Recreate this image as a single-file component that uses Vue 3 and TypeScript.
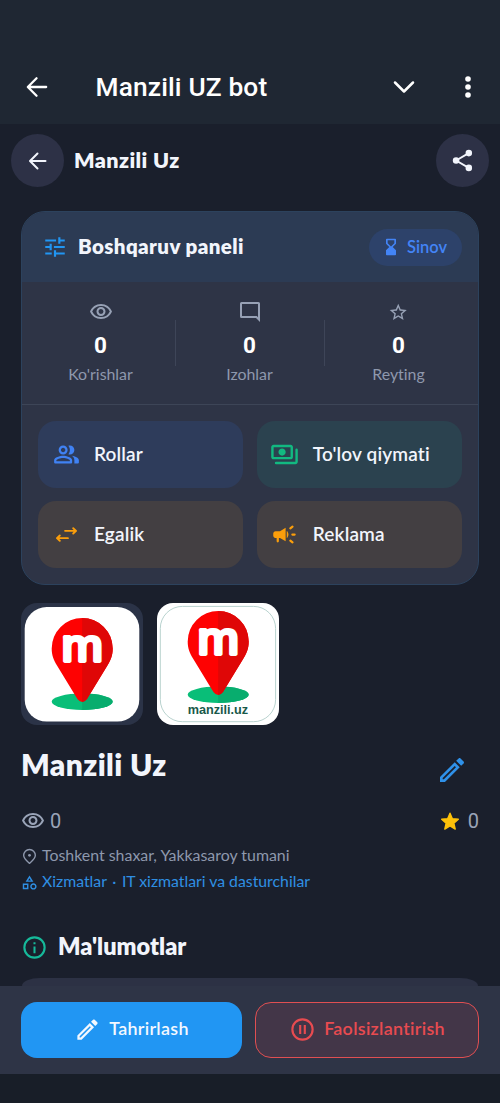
<script setup lang="ts">
interface Stat {
  icon: 'eye' | 'chat' | 'star'
  value: number
  label: string
}
interface Action {
  icon: 'people' | 'payments' | 'swap' | 'campaign'
  label: string
  tone: string
}

const stats: Stat[] = [
  { icon: 'eye', value: 0, label: "Ko'rishlar" },
  { icon: 'chat', value: 0, label: 'Izohlar' },
  { icon: 'star', value: 0, label: 'Reyting' },
]

const actions: Action[] = [
  { icon: 'people', label: 'Rollar', tone: 'blue' },
  { icon: 'payments', label: "To'lov qiymati", tone: 'green' },
  { icon: 'swap', label: 'Egalik', tone: 'amber' },
  { icon: 'campaign', label: 'Reklama', tone: 'amber' },
]

const eyePath =
  'M12 6a9.77 9.77 0 0 1 8.82 5.5A9.77 9.77 0 0 1 12 17a9.77 9.77 0 0 1-8.82-5.5A9.77 9.77 0 0 1 12 6m0-2C7 4 2.73 7.11 1 11.5 2.73 15.89 7 19 12 19s9.27-3.11 11-7.5C21.27 7.11 17 4 12 4zm0 5a2.5 2.5 0 0 1 0 5 2.5 2.5 0 0 1 0-5m0-2a4.5 4.5 0 1 0 0 9 4.5 4.5 0 0 0 0-9z'
const editPath =
  'M14.06 9.02l.92.92L5.92 19H5v-.92l9.06-9.06M17.66 3c-.25 0-.51.1-.7.29l-1.83 1.83 3.75 3.75 1.83-1.83c.39-.39.39-1.02 0-1.41l-2.34-2.34c-.2-.2-.45-.29-.71-.29zm-3.6 3.19L3 17.25V21h3.75L17.81 9.94l-3.75-3.75z'
</script>

<template>
  <div class="screen">
    <header class="appbar">
      <svg class="ab-back" viewBox="0 0 24 24"><path class="line" d="M22 12H2.500M11.500 2.500 2 12l9.500 9.500" /></svg>
      <h1 class="ab-title">Manzili UZ bot</h1>
      <svg class="ab-down" viewBox="0 0 24 24"><path class="line" d="M3 7.500 12 16.500 21 7.500" /></svg>
      <svg class="ab-more" viewBox="0 0 8 24"><circle cx="4" cy="4" r="2.800" /><circle cx="4" cy="12" r="2.800" /><circle cx="4" cy="20" r="2.800" /></svg>
    </header>

    <div class="subbar">
      <button class="round">
        <svg class="sb-back" viewBox="0 0 20 20"><path class="line" d="M17.500 10H2.500M9.500 2.500 2 10l7.500 7.500" /></svg>
      </button>
      <h2 class="sb-title">Manzili Uz</h2>
      <button class="round">
        <svg class="sb-share" viewBox="0 0 24 24">
          <path class="line" d="M18.500 4.300 5.300 12l13.200 7.700" />
          <circle cx="18.600" cy="4.300" r="3.400" /><circle cx="5.300" cy="12" r="3.400" /><circle cx="18.600" cy="19.700" r="3.400" />
        </svg>
      </button>
    </div>

    <section class="panel">
      <div class="panel-head">
        <svg class="tune" viewBox="0 0 24 24"><path d="M3 17v2h6v-2H3zM3 5v2h10V5H3zm10 16v-2h8v-2h-8v-2h-2v6h2zM7 9v2H3v2h4v2h2V9H7zm14 4v-2H11v2h10zm-6-4h2V7h4V5h-4V3h-2v6z" /></svg>
        <h3 class="panel-title">Boshqaruv paneli</h3>
        <span class="badge">
          <svg viewBox="0 0 24 24"><path d="M17 22a1 1 0 0 0 1-1v-5l-4-4 4-4V3a1 1 0 0 0-1-1H7a1 1 0 0 0-1 1v5l4 4-4 4v5a1 1 0 0 0 1 1h10zM8 7.500V4h8v3.500l-4 4-4-4z" /></svg>
          <span class="badge-text">Sinov</span>
        </span>
      </div>

      <div class="stats">
        <div v-for="s in stats" :key="s.label" class="stat">
          <div class="stat-icon" :class="s.icon">
            <svg viewBox="0 0 24 24">
              <path v-if="s.icon === 'eye'" :d="eyePath" />
              <path v-else-if="s.icon === 'chat'" d="M20.500 2h-17A1.500 1.500 0 0 0 2 3.500v13A1.500 1.500 0 0 0 3.500 18H18l4 4V3.500A1.500 1.500 0 0 0 20.500 2zM20 17.170 18.830 16H4V4h16v13.170z" />
              <path v-else d="M22 9.240l-7.190-.62L12 2 9.190 8.630 2 9.240l5.460 4.730L5.820 21 12 17.270 18.180 21l-1.630-7.030L22 9.240zM12 15.400l-3.760 2.270 1-4.280-3.320-2.880 4.380-.38L12 6.100l1.710 4.040 4.380.38-3.320 2.880 1 4.280L12 15.400z" />
            </svg>
          </div>
          <strong class="stat-value">{{ s.value }}</strong>
          <span class="stat-label">{{ s.label }}</span>
        </div>
      </div>

      <div class="actions">
        <button v-for="a in actions" :key="a.label" class="action" :class="a.tone">
          <span class="action-icon" :class="a.icon">
            <svg v-if="a.icon === 'people'" viewBox="0 0 24 24">
              <path d="M16.670 13.130C18.040 14.060 19 15.320 19 17v3h3a1 1 0 0 0 1-1v-2c0-2.180-3.570-3.470-6.330-3.870zM15 12c2.210 0 4-1.790 4-4s-1.790-4-4-4c-.47 0-.91.1-1.330.24C14.500 5.270 15 6.580 15 8s-.5 2.730-1.330 3.760c.42.14.86.24 1.330.24zM9 12c2.210 0 4-1.790 4-4s-1.790-4-4-4-4 1.790-4 4 1.790 4 4 4zm0-6c1.100 0 2 .9 2 2s-.9 2-2 2-2-.9-2-2 .9-2 2-2zm0 7c-2.670 0-8 1.340-8 4v2a1 1 0 0 0 1 1h14a1 1 0 0 0 1-1v-2c0-2.660-5.330-4-8-4zm6 5H3v-.99C3.200 16.290 6.300 15 9 15s5.800 1.290 6 2v1z" />
            </svg>
            <svg v-else-if="a.icon === 'payments'" viewBox="0 0 24 24">
              <path d="M19 14V6c0-1.100-.9-2-2-2H3c-1.100 0-2 .9-2 2v8c0 1.100.9 2 2 2h14c1.100 0 2-.9 2-2zm-2 0H3V6h14v8zm-7-7c-1.660 0-3 1.340-3 3s1.340 3 3 3 3-1.340 3-3-1.340-3-3-3zm13 1v10c0 1.100-.9 2-2 2H5a1 1 0 0 1 0-2h16V8a1 1 0 0 1 2 0z" />
            </svg>
            <svg v-else-if="a.icon === 'swap'" viewBox="0 0 24 24">
              <path class="line" d="M10.500 8.200H21.500M19 5.400 22 8.200l-3 2.800M13.500 15.800H2.500M5 13 2 15.800l3 2.800" />
            </svg>
            <svg v-else viewBox="0 0 24 24">
              <path d="M4 9c-1.100 0-2 .9-2 2v2c0 1.100.9 2 2 2h1v3a1 1 0 0 0 2 0v-3h1l5 3V6L8 9H4zM15.500 12c0-1.330-.58-2.530-1.500-3.350v6.690c.92-.81 1.500-2.010 1.500-3.340z" />
              <path class="line" d="M19 12h2M17.200 17.500l1.900 1.500M17.200 6.500l1.900-1.500" />
            </svg>
          </span>
          <span class="action-label">{{ a.label }}</span>
        </button>
      </div>
    </section>

    <div class="thumbs">
      <svg v-for="n in 2" :key="n" class="thumb" :class="{ plain: n === 2 }" viewBox="0 0 122 122">
        <rect v-if="n === 1" x="3.700" y="4" width="114.600" height="114.600" rx="22" fill="#fff" />
        <rect v-else x="3.300" y="3.400" width="115.300" height="115.300" rx="22" fill="#fff" stroke="#b8d2ce" stroke-width="1" />
        <g :transform="n === 2 ? 'translate(0 -7)' : undefined">
          <ellipse cx="61.200" cy="98.700" rx="30.500" ry="8.200" fill="#09be78" />
          <path d="M61.200 90.500a30.500 8.200 0 0 1 0 16.400z" fill="#08ad6e" />
          <path d="M61.200 15a30.500 30.500 0 0 0-30.500 30.500c0 7 2 11.500 5.300 17l20.400 33.500q4.800 6 9.600 0l20.400-33.500c3.300-5.500 5.300-10 5.300-17A30.500 30.500 0 0 0 61.200 15z" fill="#fe0202" />
          <path d="M61.200 15v84q2.700-.2 4.800-3l20.400-33.500c3.300-5.500 5.300-10 5.300-17A30.500 30.500 0 0 0 61.200 15z" fill="#df0707" />
          <text class="pin-letter" x="61.200" y="57.500" text-anchor="middle" textLength="41" lengthAdjust="spacingAndGlyphs">m</text>
        </g>
        <text v-if="n === 2" class="pin-caption" x="30.700" y="111.300" textLength="60.500" lengthAdjust="spacingAndGlyphs">manzili.uz</text>
      </svg>
    </div>

    <div class="title-row">
      <h2 class="title">Manzili Uz</h2>
      <svg class="edit" viewBox="0 0 24 24"><path :d="editPath" /></svg>
    </div>

    <div class="meta-row">
      <span class="views"><svg viewBox="0 0 24 24"><path :d="eyePath" /></svg><span class="count">0</span></span>
      <span class="rating">
        <svg viewBox="0 0 24 24"><path class="star-full" d="M12 3.500l2.600 6 6.500.6-4.900 4.300 1.500 6.400-5.700-3.400-5.700 3.400 1.500-6.400-4.900-4.300 6.500-.6z" /></svg><span class="count">0</span>
      </span>
    </div>

    <div class="info-line address">
      <svg viewBox="0 0 16 16"><path class="line" d="M8 14.500C5.300 12.200 2.500 10 2.500 6.900a5.500 5.500 0 0 1 11 0C13.500 10 10.700 12.200 8 14.500z" /><circle cx="8" cy="6.900" r="1.300" /></svg>
      <span>Toshkent shaxar, Yakkasaroy tumani</span>
    </div>
    <div class="info-line category">
      <svg viewBox="0 0 24 24"><path d="M12 2l-5.500 9h11L12 2zm0 3.840L13.930 9h-3.870L12 5.840zM17.500 13c-2.490 0-4.500 2.010-4.500 4.500s2.010 4.500 4.500 4.500 4.500-2.010 4.500-4.500-2.010-4.500-4.500-4.500zm0 7a2.500 2.500 0 0 1 0-5 2.500 2.500 0 0 1 0 5zM2.500 21.500h8v-8h-8v8zm2-6h4v4h-4v-4z" /></svg>
      <span>Xizmatlar</span><span class="dot">·</span><span>IT xizmatlari va dasturchilar</span>
    </div>

    <div class="section-head">
      <svg viewBox="0 0 24 24"><circle class="line" cx="12" cy="12" r="9" /><path d="M11.100 11h1.800v6h-1.800zM11.100 7.300h1.800v1.900h-1.800z" /></svg>
      <h3>Ma'lumotlar</h3>
    </div>
    <div class="info-card"></div>

    <footer class="footer">
      <button class="btn primary">
        <svg viewBox="0 0 24 24"><path :d="editPath" /></svg>
        <span>Tahrirlash</span>
      </button>
      <button class="btn danger">
        <svg viewBox="0 0 24 24"><circle class="line" cx="12" cy="12" r="9" /><path d="M9 8h1.900v8H9zM13.100 8H15v8h-1.900z" /></svg>
        <span>Faolsizlantirish</span>
      </button>
    </footer>
  </div>
</template>

<style>
body {
  background: #181e28;
}
</style>

<style scoped>
* {
  box-sizing: border-box;
}
.screen {
  width: 500px;
  height: 1103px;
  overflow: hidden;
  display: flex;
  flex-direction: column;
  background: #1a1f2c;
  font-family: Lato, 'Noto Sans', sans-serif;
  font-variant-ligatures: none;
  color: #f2f5fc;
}
h1, h2, h3 {
  margin: 0;
  white-space: nowrap;
  font-weight: 800;
}
span, strong {
  white-space: nowrap;
}
svg {
  display: block;
  flex: none;
  fill: currentColor;
}
.line {
  fill: none;
  stroke: currentColor;
  stroke-linecap: round;
  stroke-linejoin: round;
  stroke-width: 2;
}
button {
  border: 0;
  margin: 0;
  padding: 0;
  color: inherit;
  font: inherit;
}

.appbar {
  flex: none;
  height: 124px;
  padding: 50px 28px 0 26px;
  display: flex;
  align-items: center;
  background: #1f2733;
  color: #fff;
}
.ab-back { width: 22px; height: 22px; }
.ab-back .line { stroke-width: 2.500; }
.ab-title {
  margin-left: 47.500px;
  flex: 1;
  font: 500 26.300px/32px Roboto, sans-serif;
  letter-spacing: 0.150px;
  padding-bottom: 1px;
}
.ab-down { width: 24px; height: 24px; }
.ab-down .line { stroke-width: 2.500; }
.ab-more { width: 8px; height: 24px; margin-left: 48px; }

.subbar {
  flex: none;
  height: 73px;
  padding: 0 11px;
  display: flex;
  align-items: center;
}
.round {
  width: 53px;
  height: 53px;
  border-radius: 50%;
  background: #2d3146;
  display: flex;
  align-items: center;
  justify-content: center;
}
.sb-back { width: 20px; height: 20px; }
.sb-share { width: 23px; height: 23px; }
.sb-title {
  flex: 1;
  margin-left: 10px;
  font-size: 21.500px;
  line-height: 28px;
  padding-bottom: 2px;
  letter-spacing: 0.400px;
}

.panel {
  flex: none;
  margin: 14px 21px 0;
  height: 373.500px;
  border: 1.500px solid #2c425d;
  border-radius: 24px;
  overflow: hidden;
  background: #2e3446;
}
.panel-head {
  height: 70px;
  padding: 0 16px 0 20px;
  display: flex;
  align-items: center;
  background: #2c3b54;
}
.tune { width: 26px; height: 26px; color: #2196f3; }
.panel-title {
  margin-left: 10px;
  flex: 1;
  font-size: 20.500px;
  line-height: 26px;
  padding-bottom: 2px;
  letter-spacing: 0.400px;
}
.badge {
  width: 93px;
  height: 37px;
  border-radius: 19px;
  padding-left: 12px;
  display: flex;
  align-items: center;
  background: #2d426a;
  color: #4384f6;
}
.badge svg { width: 20px; height: 20px; }
.badge-text { margin-left: 6px; font-size: 16.500px; font-weight: 600; padding-bottom: 1px; }

.stats {
  height: 123px;
  padding: 0 5px 0 4px;
  display: grid;
  grid-template-columns: repeat(3, 1fr);
  border-bottom: 1px solid #3d4557;
}
.stat {
  position: relative;
  display: flex;
  flex-direction: column;
  align-items: center;
  padding-top: 17px;
}
.stat + .stat::before {
  content: '';
  position: absolute;
  left: 0;
  top: 38px;
  width: 1px;
  height: 46px;
  background: #3e4558;
}
.stat-icon {
  height: 26px;
  display: flex;
  align-items: center;
  color: #97a1b5;
}
.stat-icon svg { width: 24px; height: 24px; }
.stat-icon.star svg { width: 20.500px; height: 20.500px; }
.stat-value { font: 700 22.500px/28px Roboto, sans-serif; margin-top: 6px; color: #fff; }
.stat-label { font-size: 15.900px; line-height: 20px; margin-top: 5px; color: #8e98ad; }

.actions {
  padding: 16px 16px 0;
  display: grid;
  grid-template-columns: repeat(2, 1fr);
  gap: 13.500px;
}
.action {
  height: 66.500px;
  border-radius: 18px;
  display: flex;
  align-items: center;
}
.blue { background: #2e3c5b; }
.green { background: #2b424f; }
.amber { background: #433f42; }
.action-icon {
  width: 56px;
  display: flex;
  justify-content: center;
}
.action-icon svg { width: 27px; height: 27px; }
.action-icon.payments svg { width: 29px; height: 29px; }
.action-icon.swap svg { width: 23px; height: 23px; }
.people { color: #4082f4; }
.payments { color: #12b981; }
.swap, .campaign { color: #fb9e0b; }
.action-label { font-size: 19px; font-weight: 600; letter-spacing: 0.150px; padding-bottom: 2px; }

.thumbs {
  flex: none;
  margin: 18.500px 21px 0;
  display: flex;
  gap: 14px;
}
.thumb {
  width: 122px;
  height: 122px;
  border-radius: 16px;
  background: #2b3347;
}
.thumb.plain { background: #fff; }
.pin-letter {
  font: 400 45px 'Liberation Sans', sans-serif;
  fill: #fff;
  stroke: #fff;
  stroke-width: 3.800;
  stroke-linejoin: round;
}
.pin-caption {
  font: 700 13px 'Liberation Sans', sans-serif;
  fill: #19594a;
}

.title-row {
  flex: none;
  height: 50px;
  margin: 20px 32px 0 21px;
  display: flex;
  align-items: center;
}
.title { flex: 1; font-size: 30px; line-height: 38px; padding-bottom: 12px; letter-spacing: 0.400px; }
.edit { width: 32px; height: 32px; color: #2f91e9; }

.meta-row {
  flex: none;
  height: 30px;
  margin: 11px 21px 0;
  display: flex;
  justify-content: space-between;
  color: #9aa4b8;
}
.count { font: 400 20px/24px Roboto, sans-serif; padding-bottom: 1px; }
.views, .rating { display: flex; align-items: center; }
.views svg { width: 24px; height: 24px; margin-right: 5px; }
.rating svg { width: 22px; height: 22px; margin-right: 7px; color: #fdc10a; }
.star-full { stroke: currentColor; stroke-width: 1.500; stroke-linejoin: round; }

.info-line {
  flex: none;
  height: 26px;
  margin: 0 21px;
  display: flex;
  align-items: center;
  font-size: 15.900px;
  color: #8e98ad;
}
.info-line span { padding-bottom: 3px; }
.address { margin-top: 7px; }
.address svg { width: 17px; height: 17px; margin-right: 4px; }
.address .line { stroke-width: 1.300; }
.category { color: #2f8fe3; font-size: 15.800px; }
.category svg { width: 17px; height: 17px; margin-right: 4px; }
.dot { width: 15px; text-align: center; }

.section-head {
  flex: none;
  height: 40px;
  margin: 32px 21px 0;
  display: flex;
  align-items: center;
}
.section-head svg { width: 27px; height: 27px; color: #16b99a; }
.section-head .line, .btn .line { stroke-width: 1.900; }
.section-head h3 { margin-left: 10px; font-size: 23.500px; line-height: 30px; padding-bottom: 2px; }

.info-card {
  flex: none;
  height: 8px;
  margin: 11px 22px 0;
  border-radius: 18px 18px 0 0 / 8px 8px 0 0;
  background: #2c3144;
}

.footer {
  flex: none;
  height: 87.500px;
  padding: 16px 21px;
  display: flex;
  gap: 13px;
  background: #2e3446;
  box-shadow: 0 40px 0 #181e28;
}
.btn {
  height: 55.500px;
  border-radius: 16px;
  display: flex;
  align-items: center;
  justify-content: center;
  font-size: 17.900px;
  font-weight: 600;
  letter-spacing: 0.300px;
}
.btn svg { width: 27px; height: 27px; }
.btn span { margin-left: 8px; padding-bottom: 3px; }
.primary { width: 221px; background: #2196f3; color: #f3f8ff; }
.danger { width: 224px; background: #433648; border: 1.500px solid #e04f52; color: #e84b50; }
</style>
